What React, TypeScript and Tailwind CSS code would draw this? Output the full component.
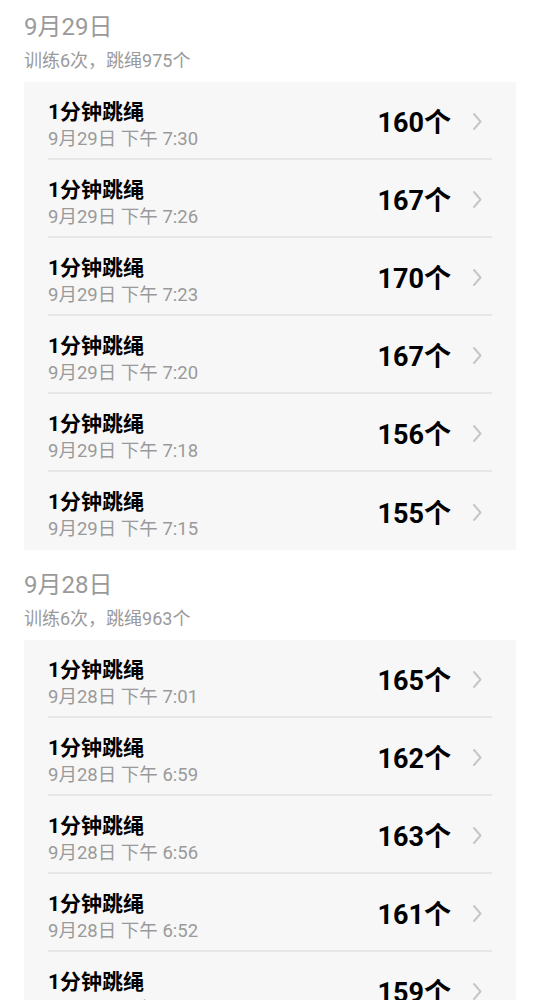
import React from "react";

type Row = { date: string; time: string; count: number };

const sections: { title: string; summary: string; rows: Row[] }[] = [
  {
    title: "9月29日",
    summary: "训练6次，跳绳975个",
    rows: [
      { date: "9月29日", time: "7:30", count: 160 },
      { date: "9月29日", time: "7:26", count: 167 },
      { date: "9月29日", time: "7:23", count: 170 },
      { date: "9月29日", time: "7:20", count: 167 },
      { date: "9月29日", time: "7:18", count: 156 },
      { date: "9月29日", time: "7:15", count: 155 },
    ],
  },
  {
    title: "9月28日",
    summary: "训练6次，跳绳963个",
    rows: [
      { date: "9月28日", time: "7:01", count: 165 },
      { date: "9月28日", time: "6:59", count: 162 },
      { date: "9月28日", time: "6:56", count: 163 },
      { date: "9月28日", time: "6:52", count: 161 },
      { date: "9月28日", time: "6:48", count: 159 },
      { date: "9月28日", time: "6:45", count: 153 },
    ],
  },
];

function Chevron() {
  return (
    <svg width="11" height="19" viewBox="0 0 11 19" fill="none">
      <path d="M2 2 L8.5 9.5 L2 17" stroke="#c6c6c6" strokeWidth="2" strokeLinecap="round" strokeLinejoin="round" />
    </svg>
  );
}

export default function App() {
  return (
    <div
      className="w-[540px] h-[1000px] overflow-hidden bg-white"
      style={{ fontFamily: 'Roboto, "Noto Sans CJK SC", sans-serif' }}
    >
      {sections.map((s, si) => (
        <div key={si} className={si === 0 ? "pt-[12px]" : "pt-[20px]"}>
          <div className="px-[24px]">
            <div className="text-[24px] leading-[30px] text-[#9a9a9a]">{s.title}</div>
            <div className="mt-[8px] text-[18px] leading-[22px] text-[#9a9a9a]">{s.summary}</div>
          </div>
          <div className="mx-[24px] mt-[10px] bg-[#f7f7f7]">
            {s.rows.map((r, ri) => (
              <div key={ri} className="px-[24px]">
                <div
                  className={
                    "flex h-[78px] " +
                    (ri < s.rows.length - 1 ? "border-b-2 border-[#e6e6e6]" : "")
                  }
                >
                  <div className="flex-1 flex flex-col pt-[17px]">
                    <div className="text-[21px] leading-[26px] font-bold text-black">1分钟跳绳</div>
                    <div className="mt-[2px] text-[18.5px] leading-[24px] text-[#9a9a9a]">
                      {r.date} 下午 {r.time}
                    </div>
                  </div>
                  <div className="flex items-center pt-[7px]">
                    <div className="text-[27px] font-bold text-black leading-none">
                      {r.count}个
                    </div>
                    <div className="ml-[21px] mr-[9px] flex items-center mt-[-5px]">
                      <Chevron />
                    </div>
                  </div>
                </div>
              </div>
            ))}
          </div>
        </div>
      ))}
    </div>
  );
}
